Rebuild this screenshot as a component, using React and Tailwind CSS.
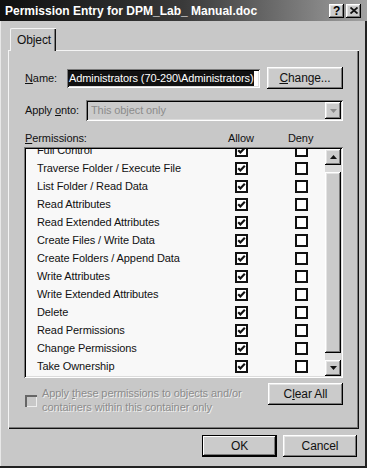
import React from "react";

const font = { fontFamily: "'Liberation Sans', Arial, sans-serif" };

const raised =
  "shadow-[inset_-1px_-1px_0_#000,inset_1px_1px_0_#fff,inset_-2px_-2px_0_#7a7a7a,inset_2px_2px_0_#e4e4e4]";
const sunken =
  "shadow-[inset_1px_1px_0_#7a7a7a,inset_-1px_-1px_0_#fff,inset_2px_2px_0_#000,inset_-2px_-2px_0_#dcdcdc]";

const perms = [
  "Full Control",
  "Traverse Folder / Execute File",
  "List Folder / Read Data",
  "Read Attributes",
  "Read Extended Attributes",
  "Create Files / Write Data",
  "Create Folders / Append Data",
  "Write Attributes",
  "Write Extended Attributes",
  "Delete",
  "Read Permissions",
  "Change Permissions",
  "Take Ownership",
];

const Box = ({ checked }) => (
  <div className="w-[13px] h-[13px] border-2 border-[#111] bg-white flex items-center justify-center">
    {checked && (
      <svg width="9" height="9" viewBox="0 0 9 9">
        <polyline points="1.2,4.2 3.4,6.4 7.8,1.8" fill="none" stroke="#111" strokeWidth="2.2" />
      </svg>
    )}
  </div>
);

const Button = ({ children, className = "" }) => (
  <div
    className={`flex items-center justify-center bg-[#cbcbcb] text-[12px] text-[#111] ${raised} ${className}`}
  >
    {children}
  </div>
);

const Arrow = ({ down, color = "#111" }) => (
  <svg width="7" height="4" viewBox="0 0 7 4">
    <polygon points={down ? "0,0 7,0 3.5,4" : "0,4 7,4 3.5,0"} fill={color} />
  </svg>
);

const App = () => {
  return (
    <div
      className="w-[367px] h-[468px] bg-[#c8c8c8] overflow-hidden tracking-[-0.1px] shadow-[inset_-2px_-2px_0_#222,inset_1px_1px_0_#e8e8e8]"
      style={font}
    >
      {/* title bar */}
      <div className="h-[21px] flex items-center bg-gradient-to-r from-[#101010] via-[#3a3a3a] to-[#a2a2a2] pl-[5px] pr-[6px]">
        <div className="text-white font-bold text-[12px] tracking-normal flex-1 whitespace-nowrap">
          Permission Entry for DPM_Lab_ Manual.doc
        </div>
        <div className="flex gap-[2px]">
          <div className={`w-[15px] h-[14px] bg-[#cbcbcb] ${raised} flex items-center justify-center text-[12px] font-bold leading-none`}>
            ?
          </div>
          <div className={`w-[15px] h-[14px] bg-[#cbcbcb] ${raised} flex items-center justify-center`}>
            <svg width="8" height="7" viewBox="0 0 8 7">
              <path d="M0.5 0.5 L7.5 6.5 M7.5 0.5 L0.5 6.5" stroke="#111" strokeWidth="1.8" />
            </svg>
          </div>
        </div>
      </div>

      <div className="pl-[8px] pr-[8px] pt-[7px]">
        {/* tab */}
        <div className="ml-[2px] w-[46px] h-[23px] -mb-[1px] relative z-10 bg-[#c8c8c8] border-t border-l border-[#f4f4f4] shadow-[inset_-1px_0_0_#111,inset_-2px_0_0_#7a7a7a] rounded-tl-[2px] flex items-center pl-[6px] text-[12px] text-[#111]">
          Object
        </div>

        {/* panel */}
        <div className="h-[379px] border-t border-l border-[#f4f4f4] shadow-[inset_-1px_-1px_0_#111,inset_-2px_-2px_0_#7a7a7a] pl-[16px] pr-[15px] flex flex-col text-[11px] text-[#111]">
          <div className="mt-[16px] h-[22px] flex items-center">
            <div className="w-[42px]">
              <span className="underline">N</span>ame:
            </div>
            <div className={`w-[193px] h-[19px] bg-white ${sunken} flex items-center pl-[1px] overflow-hidden`}>
              <span className="bg-[#111] text-white leading-[15px] px-[1px] whitespace-nowrap">
                Administrators (70-290\Administrators)
              </span>
            </div>
            <Button className="ml-[7px] w-[76px] h-[22px]">
              <span>
                <span className="underline">C</span>hange...
              </span>
            </Button>
          </div>

          <div className="mt-[11px] h-[21px] flex items-center">
            <div className="w-[61px] whitespace-nowrap">
              Apply <span className="underline">o</span>nto:
            </div>
            <div className={`w-[257px] h-[21px] bg-[#cbcbcb] ${sunken} flex items-center pl-[5px] pr-[2px] text-[#8c8c8c]`}>
              <span className="flex-1">This object only</span>
              <div className={`w-[16px] h-[17px] bg-[#cbcbcb] ${raised} flex items-center justify-center`}>
                <Arrow down color="#8c8c8c" />
              </div>
            </div>
          </div>

          <div className="mt-[10px] h-[14px] flex items-center leading-none">
            <div className="w-[203px]">
              <span className="underline">P</span>ermissions:
            </div>
            <div className="w-[60px]">Allow</div>
            <div>Deny</div>
          </div>

          {/* list */}
          <div className={`mt-[2px] -ml-[1px] w-[319px] h-[231px] bg-[#f8f8f8] ${sunken} p-[2px] flex`}>
            <div className="flex-1 overflow-hidden">
              <div className="-mt-[8px]">
                {perms.map((p) => (
                  <div key={p} className="h-[18px] flex items-center">
                    <div className="w-[209px] pl-[11px] whitespace-nowrap">{p}</div>
                    <Box checked />
                    <div className="w-[47px]" />
                    <Box />
                  </div>
                ))}
              </div>
            </div>
            <div className="w-[16px] flex flex-col bg-[#dadada]">
              <div className={`h-[16px] bg-[#cbcbcb] ${raised} flex items-center justify-center`}>
                <Arrow />
              </div>
              <div className="flex-1 py-[7px] flex">
                <div className={`flex-1 bg-[#cbcbcb] ${raised}`} />
              </div>
              <div className={`h-[16px] bg-[#cbcbcb] ${raised} flex items-center justify-center`}>
                <Arrow down />
              </div>
            </div>
          </div>

          <div className="mt-[5px] flex items-start">
            <div className="mt-[12px] w-[12px] h-[12px] border-t-2 border-l-2 border-[#666] shadow-[inset_-1px_-1px_0_#eee]" />
            <div className="ml-[5px] mt-[3px] w-[210px] leading-[14px] text-[#8c8c8c] [text-shadow:1px_1px_0_#f0f0f0]">
              Apply <span className="underline">t</span>hese permissions to objects and/or containers within this
              container only
            </div>
            <Button className="ml-[16px] w-[75px] h-[22px]">
              <span>
                C<span className="underline">l</span>ear All
              </span>
            </Button>
          </div>
        </div>

        <div className="mt-[6px] flex justify-end gap-[6px] pr-[2px]">
          <Button className="w-[75px] h-[22px] shadow-[inset_0_0_0_1px_#000,inset_-2px_-2px_0_#000,inset_2px_2px_0_#fff,inset_-3px_-3px_0_#7a7a7a]">
            OK
          </Button>
          <Button className="w-[74px] h-[22px]">Cancel</Button>
        </div>
      </div>
    </div>
  );
};

export default App;
